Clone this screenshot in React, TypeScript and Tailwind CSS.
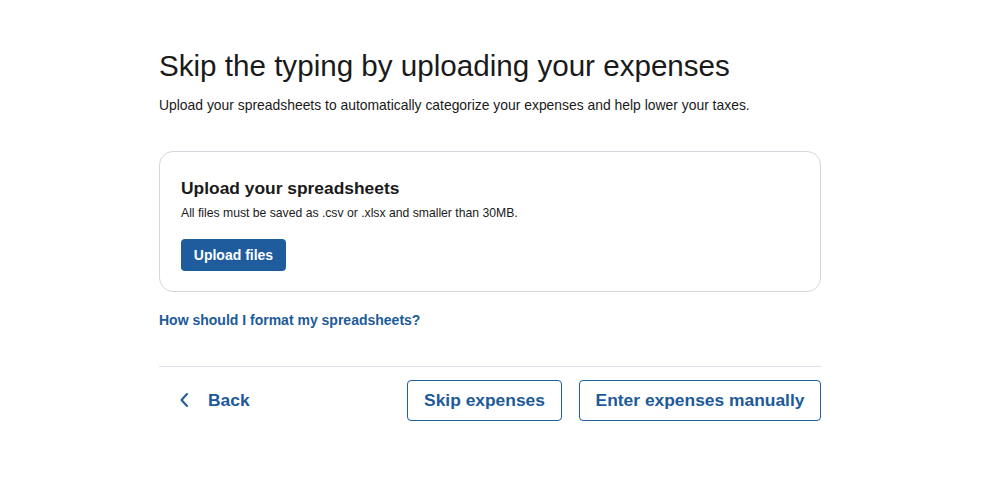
import React from "react";

export default function App() {
  return (
    <div className="min-h-[500px] w-full bg-white" style={{ fontFamily: '"Liberation Sans", Arial, sans-serif' }}>
      <div className="w-[662px] pt-[48px] ml-[159px]">
        <h1 className="text-[29.6px] leading-[36px] text-[#1a1a1a] font-normal">Skip the typing by uploading your expenses</h1>
        <p className="mt-[11px] text-[13.9px] leading-[20px] text-[#1a1a1a]">
          Upload your spreadsheets to automatically categorize your expenses and help lower your taxes.
        </p>
        <div className="mt-[36px] h-[141px] rounded-[14px] border border-[#d3d8de] px-[21px] pt-[25px]">
          <h2 className="text-[17.4px] leading-[22px] font-bold text-[#1a1a1a]">Upload your spreadsheets</h2>
          <p className="mt-[6px] text-[12.2px] leading-[16px] text-[#1a1a1a]">
            All files must be saved as .csv or .xlsx and smaller than 30MB.
          </p>
          <button className="mt-[18px] h-[32px] w-[105px] rounded-[4px] bg-[#1e5c9e] text-[14px] font-bold text-white">
            Upload files
          </button>
        </div>
        <a className="mt-[20px] block text-[14px] leading-[17px] font-bold text-[#1d5a99]" href="#">
          How should I format my spreadsheets?
        </a>
        <div className="mt-[37px] h-px bg-[#dde3ea]" />
        <div className="mt-[13px] flex items-center">
          <button className="flex items-center pl-[20px] text-[17.4px] font-bold text-[#1d5a99]">
            <svg width="11" height="16" viewBox="0 0 11 16" fill="none" className="mr-[18px]">
              <path d="M8 2 L2.5 8 L8 14" stroke="#1d5a99" strokeWidth="2" strokeLinecap="round" strokeLinejoin="round" />
            </svg>
            Back
          </button>
          <div className="ml-auto flex gap-[17px]">
            <button className="h-[41px] w-[155px] rounded-[4px] border border-[#1e5c9e] text-[17.4px] font-bold text-[#1d5a99]">
              Skip expenses
            </button>
            <button className="h-[41px] w-[242px] rounded-[4px] border border-[#1e5c9e] text-[17.4px] font-bold text-[#1d5a99]">
              Enter expenses manually
            </button>
          </div>
        </div>
      </div>
    </div>
  );
}
